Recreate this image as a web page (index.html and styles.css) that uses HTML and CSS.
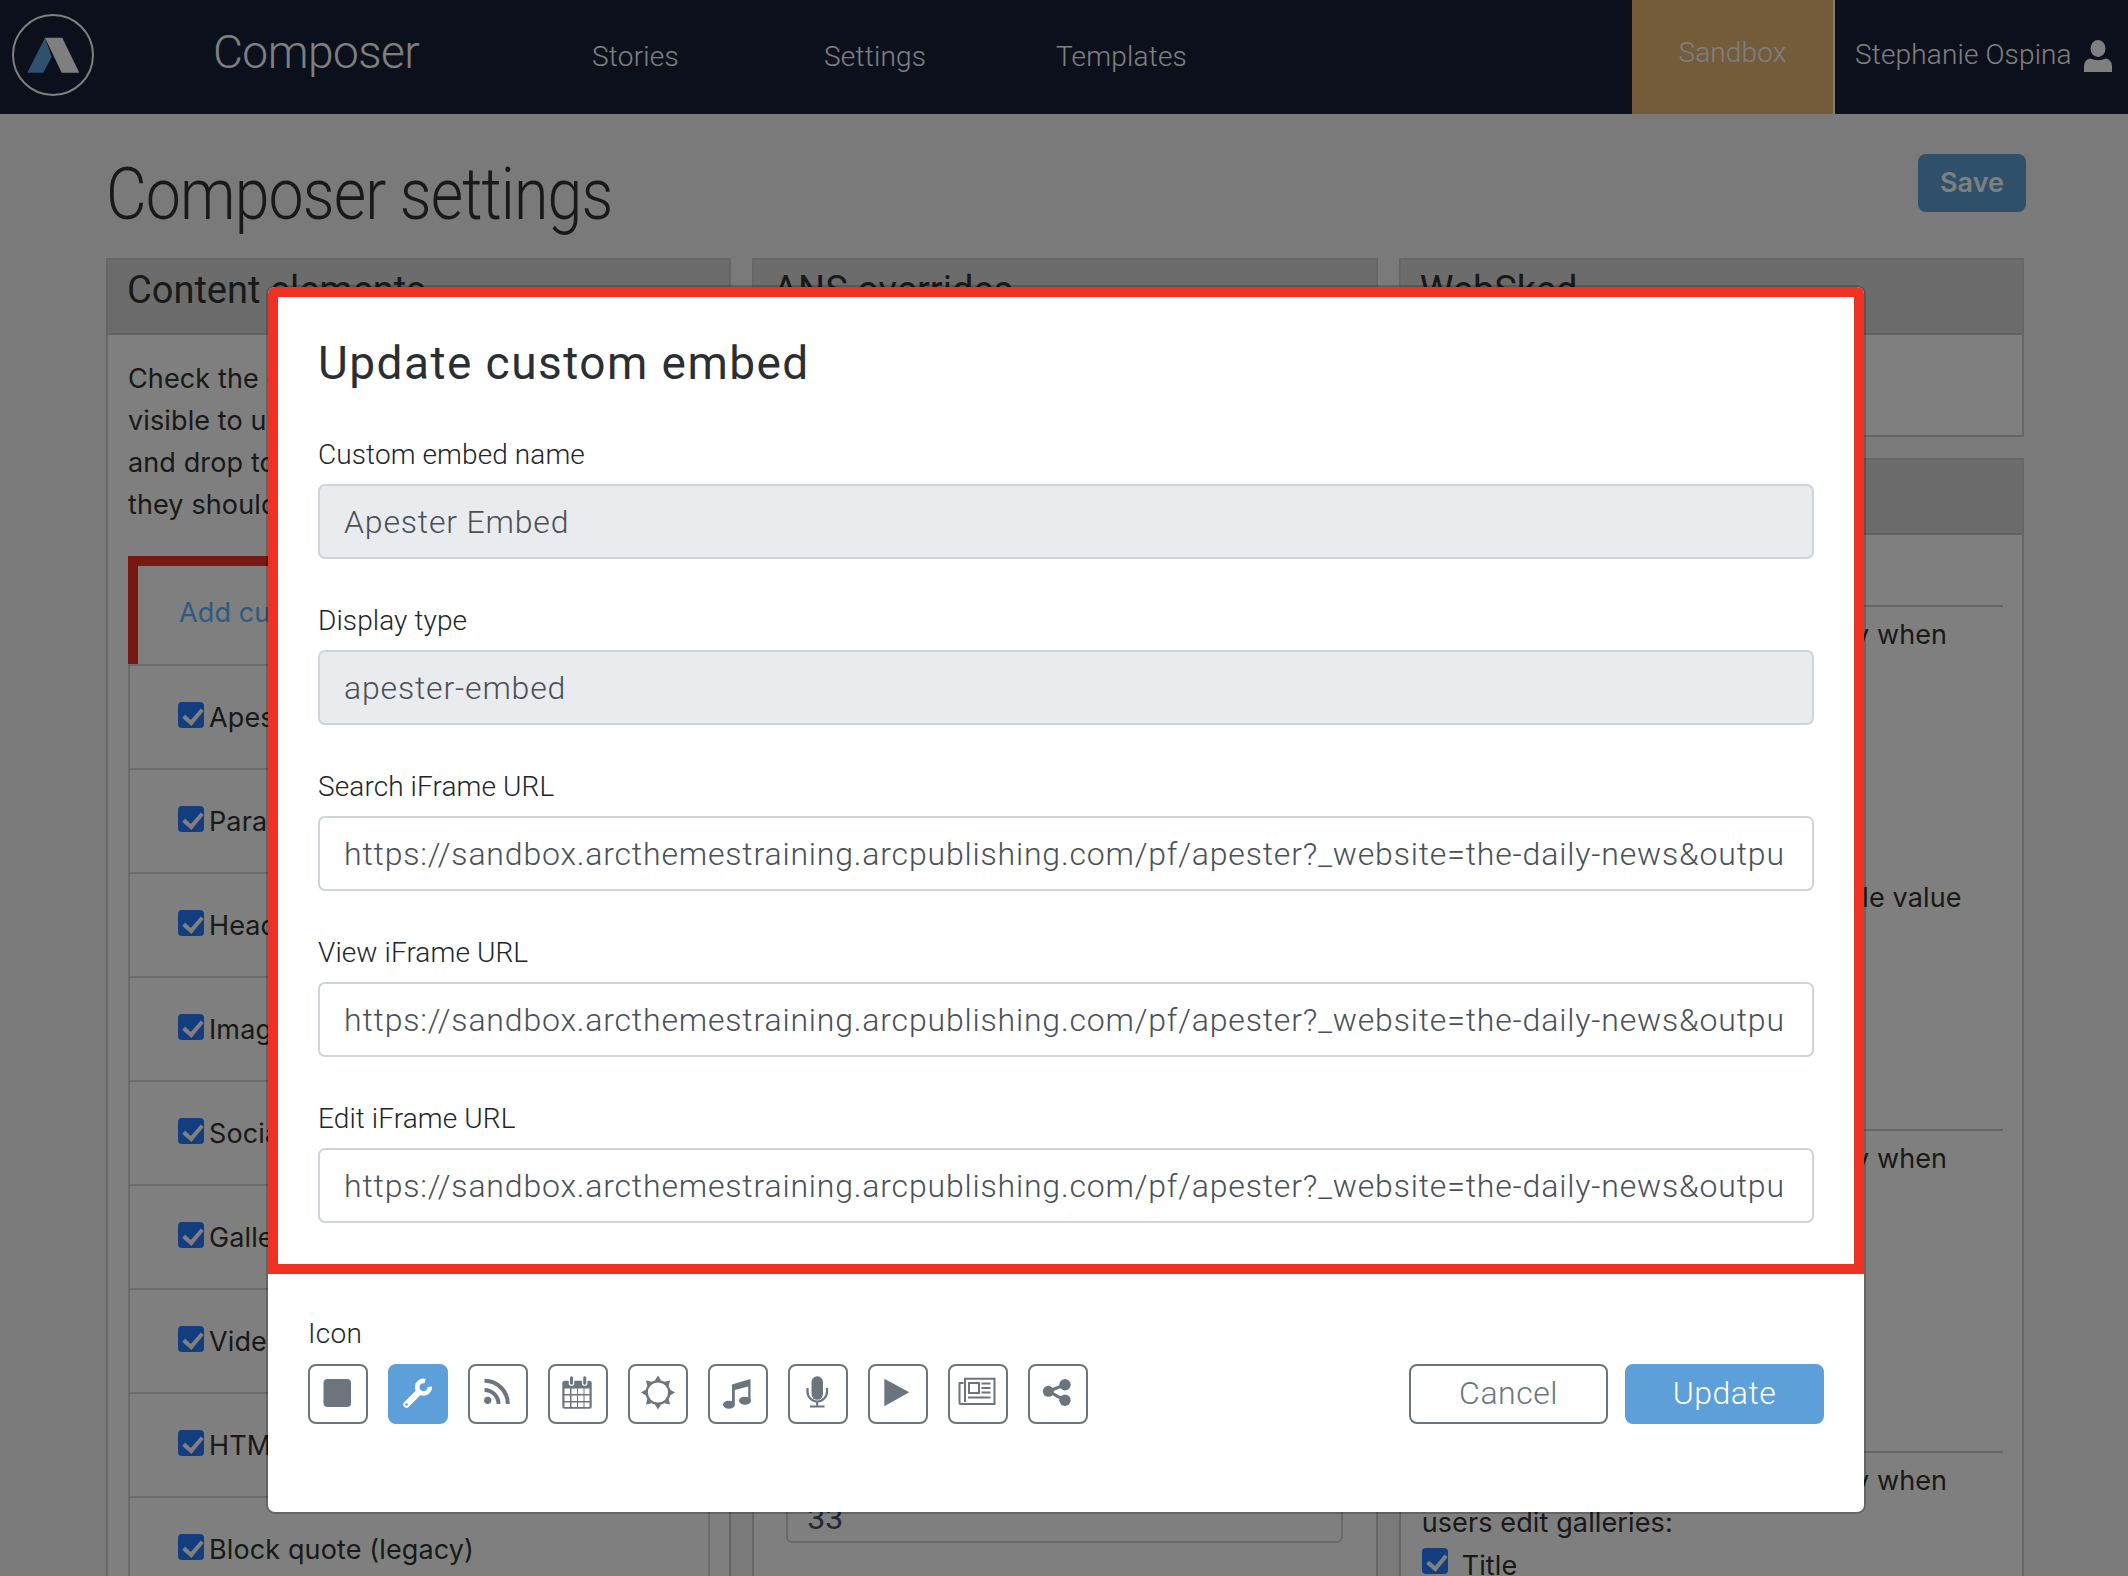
FILE: index.html
```html
<!DOCTYPE html>
<html lang="en">
<head>
    <meta charset="UTF-8">
    <meta name="viewport" content="width=device-width, initial-scale=1.0">
    <title>Composer settings</title>
    <link rel="stylesheet" href="styles.css">
</head>
<body>
    <header class="topbar">
        <svg class="logo" viewBox="11 13 84 84">
            <circle cx="53" cy="55" r="40" fill="none" stroke="#fff" stroke-width="2"/>
            <polygon points="45,37.7 27.3,72.7 43.3,72.7 51.7,56.7" fill="#5fa0e0"/>
            <polygon points="45,37.7 62.3,37.7 79.3,72.7 61.7,72.7" fill="#fff"/>
        </svg>
        <div class="brand">Composer</div>
        <nav class="nav">
            <a>Stories</a>
            <a>Settings</a>
            <a>Templates</a>
        </nav>
        <div class="env">Sandbox</div>
        <div class="user">
            <span>Stephanie Ospina</span>
            <svg class="user-icon" viewBox="0 0 28 32">
                <ellipse cx="14" cy="8.500" rx="7.500" ry="8.500" fill="#fff"/>
                <path d="M0 32V26q0-6 6-7.500 8 3.500 16 0 6 1.500 6 7.500V32z" fill="#fff"/>
            </svg>
        </div>
    </header>

    <main class="page">
        <div class="title-row">
            <h1>Composer settings</h1>
            <button class="save">Save</button>
        </div>

        <div class="columns">
            <section class="panel">
                <h2>Content elements</h2>
                <div class="panel-body">
                    <p class="intro">Check the elements<br>visible to users<br>and drop to order<br>they should appear</p>
                    <div class="add-row"><a>Add custom embed</a></div>
                    <ul class="elements">
                        <li><span class="check"></span>Apester</li>
                        <li><span class="check"></span>Paragraph</li>
                        <li><span class="check"></span>Header</li>
                        <li><span class="check"></span>Image</li>
                        <li><span class="check"></span>Social</li>
                        <li><span class="check"></span>Gallery</li>
                        <li><span class="check"></span>Video</li>
                        <li><span class="check"></span>HTML</li>
                        <li><span class="check"></span>Block quote (legacy)</li>
                    </ul>
                </div>
            </section>

            <section class="panel">
                <h2>ANS overrides</h2>
                <div class="panel-body ans-body">
                    <input class="number" type="text" value="33">
                </div>
            </section>

            <div class="stack">
                <section class="panel panel-short">
                    <h2>WebSked</h2>
                    <div class="panel-body"></div>
                </section>
                <section class="panel">
                    <h2>&nbsp;</h2>
                    <div class="panel-body fields">
                        <div class="field field-a">
                            <p>Select the fields we always display when</p>
                            <p class="later">Leave fields empty to use the single value</p>
                        </div>
                        <div class="field field-b">
                            <p>Select the fields we always display when</p>
                        </div>
                        <div class="field">
                            <p>Select the fields we always display when<br>users edit galleries:</p>
                            <div class="title-check"><span class="check"></span>Title</div>
                        </div>
                    </div>
                </section>
            </div>
        </div>
    </main>

    <div class="backdrop">
        <div class="modal">
            <form class="modal-body">
                <h3>Update custom embed</h3>
                <label>Custom embed name</label>
                <input type="text" value="Apester Embed" disabled>
                <label>Display type</label>
                <input type="text" value="apester-embed" disabled>
                <label>Search iFrame URL</label>
                <input type="text" value="https://sandbox.arcthemestraining.arcpublishing.com/pf/apester?_website=the-daily-news&amp;outpu">
                <label>View iFrame URL</label>
                <input type="text" value="https://sandbox.arcthemestraining.arcpublishing.com/pf/apester?_website=the-daily-news&amp;outpu">
                <label>Edit iFrame URL</label>
                <input type="text" value="https://sandbox.arcthemestraining.arcpublishing.com/pf/apester?_website=the-daily-news&amp;outpu">
            </form>
            <div class="modal-foot">
                <div class="icon-picker">
                    <div class="icon-label">Icon</div>
                    <div class="icons">
                        <button class="icon-btn">
                            <svg viewBox="0 0 56 56"><rect x="13.500" y="13" width="27.500" height="28" rx="4" fill="#6c757d"/></svg>
                        </button>
                        <button class="icon-btn active">
                            <svg viewBox="0 0 56 56">
                                <path d="M16.500 38.500 L28 27" stroke="#fff" stroke-width="6.500" stroke-linecap="round" fill="none"/>
                                <path d="M39.800 20.700 A6.300 6.300 0 1 1 35.100 15.100" stroke="#fff" stroke-width="4.500" fill="none"/>
                                <circle cx="16.500" cy="38.500" r="1.300" fill="#5c9fd9"/>
                            </svg>
                        </button>
                        <button class="icon-btn">
                            <svg viewBox="0 0 56 56">
                                <circle cx="17.700" cy="34.300" r="3.600" fill="#6c757d"/>
                                <path d="M14.500 24 A14 14 0 0 1 28.500 38 M14.500 14.700 A23.300 23.300 0 0 1 37.800 38" stroke="#6c757d" stroke-width="4" fill="none"/>
                            </svg>
                        </button>
                        <button class="icon-btn">
                            <svg viewBox="0 0 56 56">
                                <rect x="12.300" y="14.700" width="29.400" height="28" rx="2.500" fill="#6c757d"/>
                                <g fill="#fff">
                                    <rect x="14.500" y="22.500" width="5.500" height="5.500"/><rect x="21.500" y="22.500" width="5.500" height="5.500"/><rect x="28" y="22.500" width="5.500" height="5.500"/><rect x="34.500" y="22.500" width="5" height="5.500"/>
                                    <rect x="14.500" y="29.500" width="5.500" height="5.500"/><rect x="21.500" y="29.500" width="5.500" height="5.500"/><rect x="28" y="29.500" width="5.500" height="5.500"/><rect x="34.500" y="29.500" width="5" height="5.500"/>
                                    <rect x="14.500" y="36.500" width="5.500" height="4.500"/><rect x="21.500" y="36.500" width="5.500" height="4.500"/><rect x="28" y="36.500" width="5.500" height="4.500"/><rect x="34.500" y="36.500" width="5" height="4.500"/>
                                    <rect x="18.800" y="9.500" width="5.400" height="10.500" rx="2.700"/><rect x="32" y="9.500" width="5.400" height="10.500" rx="2.700"/>
                                </g>
                                <rect x="20" y="10.300" width="3" height="8.500" rx="1.500" fill="#6c757d"/>
                                <rect x="33.200" y="10.300" width="3" height="8.500" rx="1.500" fill="#6c757d"/>
                            </svg>
                        </button>
                        <button class="icon-btn">
                            <svg viewBox="0 0 56 56">
                                <circle cx="28" cy="26.500" r="11.300" fill="none" stroke="#6c757d" stroke-width="2.400"/>
                                <g fill="#6c757d">
                                    <polygon points="24.900,14.500 31.100,14.500 28,9.500"/>
                                    <polygon points="24.900,14.500 31.100,14.500 28,9.500" transform="rotate(45 28 26.500)"/>
                                    <polygon points="24.900,14.500 31.100,14.500 28,9.500" transform="rotate(90 28 26.500)"/>
                                    <polygon points="24.900,14.500 31.100,14.500 28,9.500" transform="rotate(135 28 26.500)"/>
                                    <polygon points="24.900,14.500 31.100,14.500 28,9.500" transform="rotate(180 28 26.500)"/>
                                    <polygon points="24.900,14.500 31.100,14.500 28,9.500" transform="rotate(225 28 26.500)"/>
                                    <polygon points="24.900,14.500 31.100,14.500 28,9.500" transform="rotate(270 28 26.500)"/>
                                    <polygon points="24.900,14.500 31.100,14.500 28,9.500" transform="rotate(315 28 26.500)"/>
                                </g>
                            </svg>
                        </button>
                        <button class="icon-btn">
                            <svg viewBox="0 0 56 56">
                                <path d="M22 37V18.500L40.500 13V34.500H38.200V20.500L24.800 24V38z" fill="#6c757d"/>
                                <ellipse cx="19" cy="38.700" rx="6" ry="4" fill="#6c757d"/>
                                <ellipse cx="35" cy="34.700" rx="6" ry="4" fill="#6c757d"/>
                            </svg>
                        </button>
                        <button class="icon-btn">
                            <svg viewBox="0 0 56 56">
                                <rect x="21.500" y="10.300" width="11.500" height="23.500" rx="5.700" fill="#6c757d"/>
                                <path d="M17.500 22V25.500A9.700 10 0 0 0 37 25.500V22M27.200 35.500V39.700M20 40.500H34.500" stroke="#6c757d" stroke-width="2.200" fill="none"/>
                            </svg>
                        </button>
                        <button class="icon-btn">
                            <svg viewBox="0 0 56 56"><polygon points="14.300,12.700 39.300,26.300 14.300,40.300" fill="#6c757d"/></svg>
                        </button>
                        <button class="icon-btn">
                            <svg viewBox="0 0 56 56">
                                <path d="M13.500 17H9.500V36.500Q9.500 38 11 38H44.500V12.700H15V36" fill="none" stroke="#6c757d" stroke-width="2"/>
                                <rect x="19" y="17" width="10" height="10" fill="none" stroke="#6c757d" stroke-width="2"/>
                                <path d="M31.500 17.500H40.500M31.500 22H40.500M31.500 26.500H40.500M18 31.500H40.500" stroke="#6c757d" stroke-width="2"/>
                            </svg>
                        </button>
                        <button class="icon-btn">
                            <svg viewBox="0 0 56 56">
                                <path d="M35 18.700L18.500 25.300L35 34.300" stroke="#6c757d" stroke-width="3.200" fill="none"/>
                                <circle cx="18.300" cy="25.300" r="5.500" fill="#6c757d"/>
                                <circle cx="35" cy="18.700" r="5.700" fill="#6c757d"/>
                                <circle cx="35" cy="34.300" r="5.700" fill="#6c757d"/>
                            </svg>
                        </button>
                    </div>
                </div>
                <div class="actions">
                    <button class="btn-cancel">Cancel</button>
                    <button class="btn-update">Update</button>
                </div>
            </div>
        </div>
    </div>
</body>
</html>
```

FILE: styles.css
```css
* {
    box-sizing: border-box;
}

html, body {
    height: 1576px;
    overflow: hidden;
}

body {
    margin: 0;
    background-color: #f5f5f5;
    color: #333;
    font-family: Inter, "Liberation Sans", sans-serif;
    font-size: 27px;
    letter-spacing: 0.12px;
    position: relative;
}

/* top bar */
.topbar {
    display: flex;
    height: 114px;
    background-color: #181e38;
    color: #fff;
    font-family: Roboto, sans-serif;
    font-weight: 300;
}

.logo {
    width: 84px;
    height: 84px;
    margin: 13px 0 0 11px;
}

.brand {
    width: 379px;
    margin-left: 118px;
    font-size: 46px;
    line-height: 104px;
    letter-spacing: -0.5px;
}

.nav {
    display: flex;
    flex: 1;
    font-size: 28px;
    line-height: 114px;
    letter-spacing: 0.2px;
}

.nav a {
    width: 232px;
}

.env {
    width: 203px;
    background-color: #e8b774;
    border-right: 2px solid #fff;
    text-align: center;
    font-size: 28px;
    line-height: 106px;
}

.user {
    display: flex;
    align-items: flex-start;
    gap: 12px;
    width: 293px;
    padding: 0 15px 0 20px;
    font-size: 28px;
    line-height: 110px;
    letter-spacing: 0.15px;
}

.user-icon {
    width: 28px;
    height: 32px;
    margin-top: 40px;
}

/* settings page */
.page {
    padding: 0 104px 0 106px;
}

.title-row {
    display: flex;
    justify-content: space-between;
    height: 144px;
    margin-right: -2px;
}

h1 {
    margin: 0;
    font-family: Roboto, sans-serif;
    font-weight: 300;
    font-size: 72px;
    line-height: 162px;
    letter-spacing: -1px;
    transform: scaleX(0.87);
    transform-origin: left;
}

.save {
    width: 108px;
    height: 58px;
    margin-top: 40px;
    padding-bottom: 2px;
    background-color: #5fa0d4;
    color: #fff;
    border: none;
    border-radius: 8px;
    font-family: Inter, sans-serif;
    font-weight: 600;
    font-size: 27px;
}

.columns {
    display: grid;
    grid-template-columns: repeat(3, 1fr);
    gap: 21px;
}

.stack {
    display: flex;
    flex-direction: column;
    gap: 21px;
}

.panel {
    background-color: #fff;
    border: 2px solid #ccc;
}

.panel h2 {
    margin: 0;
    height: 75px;
    padding-left: 19px;
    background-color: #d8d8d8;
    border-bottom: 2px solid #c4c4c4;
    font-family: Roboto, sans-serif;
    font-weight: 400;
    font-size: 38px;
    line-height: 60px;
    letter-spacing: 0;
}

.panel-short {
    height: 179px;
}

.panel-body {
    padding: 23px 19px 0 20px;
}

.intro {
    margin: 0;
    line-height: 42px;
    height: 198px;
}

.add-row {
    height: 108px;
    border-left: 10px solid #ef3124;
    border-top: 10px solid #ef3124;
    padding-left: 41px;
    line-height: 94px;
    color: #5eb4ff;
}

.elements {
    list-style: none;
    margin: 0;
    padding: 0;
    border: solid #d6d6d6;
    border-width: 2px 2px 0 2px;
}

.elements li {
    display: flex;
    align-items: flex-start;
    gap: 5px;
    height: 104px;
    padding: 36px 0 0 48px;
    border-bottom: 2px solid #d6d6d6;
    line-height: 32px;
}

.check {
    display: block;
    position: relative;
    width: 26px;
    height: 26px;
    background-color: #287aff;
    border-radius: 4px;
}

/* tick of the checkbox */
.check::after {
    content: "";
    position: absolute;
    left: 9px;
    top: 3px;
    width: 8px;
    height: 15px;
    border: solid #fff;
    border-width: 0 4px 4px 0;
    transform: rotate(40deg);
}

.ans-body {
    height: 1300px;
    padding-left: 32px;
    padding-top: 1157px;
}

.number {
    display: block;
    width: 557px;
    height: 51px;
    padding: 0 19px;
    background-color: #fff;
    border: 2px solid #ced4da;
    border-radius: 6px;
    color: #495057;
    font-family: Roboto, sans-serif;
    font-size: 32px;
}

.fields {
    padding-top: 70px;
    padding-left: 21px;
}

.field {
    border-top: 2px solid #ccc;
}

.field p {
    margin: 0;
    padding-top: 7px;
    line-height: 42px;
    white-space: nowrap;
}

.field p.later {
    padding-top: 221px;
}

.field-a {
    height: 524px;
}

.field-b {
    height: 322px;
}

.title-check {
    display: flex;
    gap: 14px;
    margin-top: 4px;
    line-height: 36px;
}

/* modal */
.backdrop {
    position: absolute;
    inset: 0;
    padding: 287px 0 0 268px;
    background-color: rgba(0, 0, 0, 0.5);
}

.modal {
    width: 1596px;
    height: 1225px;
    background-color: #fff;
    border-radius: 7px;
    box-shadow: 0 0 0 2px rgba(0, 0, 0, 0.2);
    font-family: Roboto, sans-serif;
    font-weight: 300;
    color: #212529;
}

.modal-body {
    display: flex;
    flex-direction: column;
    height: 987px;
    padding: 37px 40px 0 40px;
    border: 10px solid #ef3124;
    border-radius: 7px 7px 0 0;
}

.modal-body h3 {
    margin: 0 0 46px;
    font-weight: 400;
    font-size: 46px;
    line-height: 58px;
    letter-spacing: 1.45px;
    color: #2b2f33;
}

.modal-body label {
    font-size: 28px;
    line-height: 34px;
    margin-bottom: 12px;
    letter-spacing: 0.1px;
}

.modal-body input {
    flex: none;
    height: 75px;
    margin-bottom: 45px;
    padding: 0 24px;
    background-color: #fff;
    border: 2px solid #ced4da;
    border-radius: 7px;
    color: #495057;
    font-family: Roboto, sans-serif;
    font-weight: 300;
    font-size: 32px;
    letter-spacing: 0.82px;
    width: 100%;
}

.modal-body input:last-child {
    margin-bottom: 0;
}

.modal-body input:disabled {
    background-color: #e9ebef;
}

.modal-foot {
    display: flex;
    justify-content: space-between;
    align-items: flex-start;
    padding: 43px 40px 0 40px;
}

.icon-label {
    font-size: 28px;
    line-height: 34px;
    margin-bottom: 13px;
    letter-spacing: 0.3px;
}

.icons {
    display: flex;
    gap: 20px;
}

.icon-btn {
    display: block;
    width: 60px;
    height: 60px;
    padding: 0;
    background-color: #fff;
    border: 2px solid #6c757d;
    border-radius: 8px;
}

.icon-btn svg {
    display: block;
    width: 56px;
    height: 56px;
}

.icon-btn.active {
    background-color: #5c9fd9;
    border-color: #5c9fd9;
}

.actions {
    display: flex;
    gap: 17px;
    margin-top: 47px;
}

.actions button {
    width: 199px;
    height: 60px;
    padding-bottom: 3px;
    border-radius: 8px;
    font-family: Roboto, sans-serif;
    font-weight: 300;
    font-size: 32px;
    letter-spacing: 0.5px;
}

.btn-cancel {
    background-color: #fff;
    border: 2px solid #6c757d;
    color: #6c757d;
}

.btn-update {
    background-color: #5c9fd9;
    border: 2px solid #5c9fd9;
    color: #fff;
}
```
